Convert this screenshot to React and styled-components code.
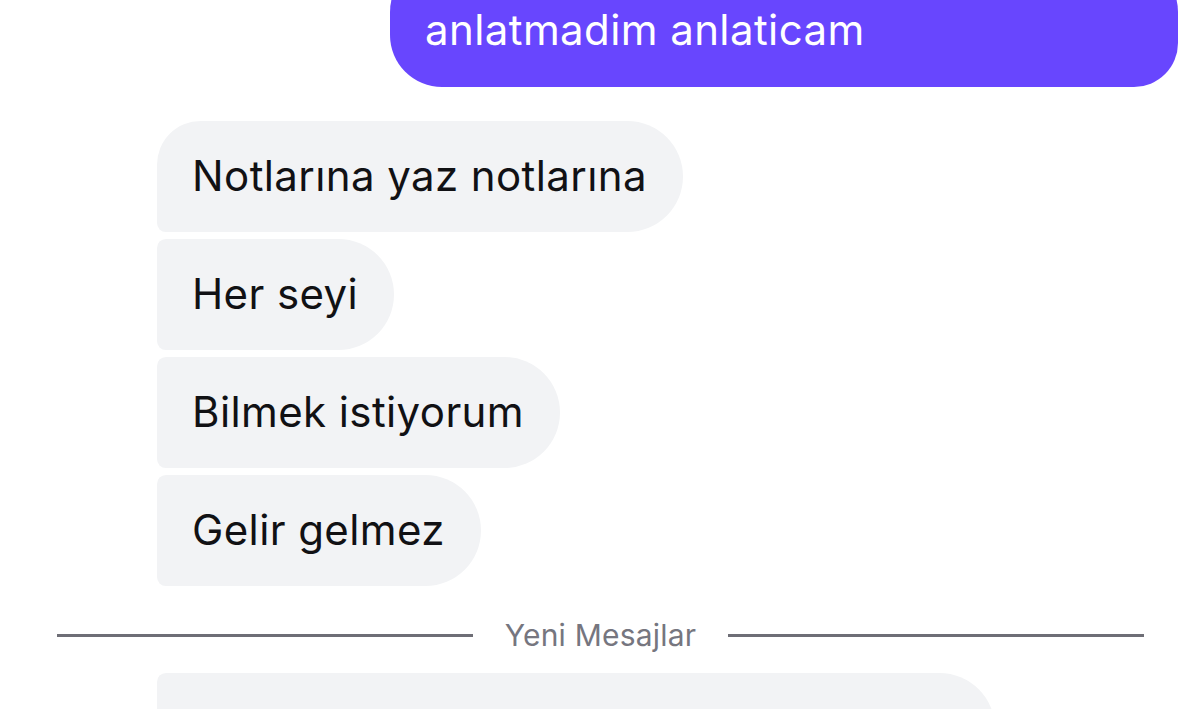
import styled, { createGlobalStyle } from 'styled-components'

const Global = createGlobalStyle`
  html, body {
    margin: 0;
    padding: 0;
    background: #ffffff;
    overflow: hidden;
  }
  body {
    font-family: Inter, "Noto Sans", sans-serif;
  }
`

const Screen = styled.div`
  width: 1200px;
  height: 709px;
  overflow: hidden;
  display: flex;
  flex-direction: column;
`

const Thread = styled.div`
  margin-top: -40px;
  display: flex;
  flex-direction: column;
`

const OutRow = styled.div`
  display: flex;
  justify-content: flex-end;
  padding-right: 22px;
  margin-bottom: 34px;
`

const OutBubble = styled.div`
  width: 788px;
  box-sizing: border-box;
  background: #6846fe;
  color: #ffffff;
  font-size: 42px;
  line-height: 48px;
  padding: 46px 35px 33px;
  border-radius: 52px 52px 44px 52px;
  letter-spacing: 0.4px;
`

const InGroup = styled.div`
  display: flex;
  flex-direction: column;
  align-items: flex-start;
  gap: 7px;
  padding-left: 157px;
`

const InBubble = styled.div`
  background: #f2f3f5;
  color: #111114;
  font-size: 42px;
  line-height: 48px;
  height: 111px;
  box-sizing: border-box;
  padding: 31px 36px 0 35px;
  border-radius: ${p => (p.$first ? '44px' : '9px')} 56px 56px 9px;
  letter-spacing: 0.4px;
`

const Divider = styled.div`
  display: flex;
  align-items: center;
  gap: 32px;
  padding: 0 56px 0 57px;
  margin: 31px 0 20px;
`

const Rule = styled.div`
  flex: 1;
  height: 3px;
  background: #6e6e76;
`

const DividerText = styled.span`
  color: #76767f;
  font-size: 30px;
  line-height: 36px;
  letter-spacing: 0.2px;
`

const NextBubble = styled.div`
  margin-left: 157px;
  width: 838px;
  height: 111px;
  background: #f2f3f5;
  border-radius: 9px 56px 56px 9px;
`

const App = () => {
  return (
    <Screen>
      <Global />
      <Thread>
        <OutRow>
          <OutBubble>anlatmadim anlaticam</OutBubble>
        </OutRow>
        <InGroup>
          <InBubble $first>Notlarına yaz notlarına</InBubble>
          <InBubble>Her seyi</InBubble>
          <InBubble>Bilmek istiyorum</InBubble>
          <InBubble>Gelir gelmez</InBubble>
        </InGroup>
        <Divider>
          <Rule />
          <DividerText>Yeni Mesajlar</DividerText>
          <Rule />
        </Divider>
        <NextBubble />
      </Thread>
    </Screen>
  )
}

export default App
